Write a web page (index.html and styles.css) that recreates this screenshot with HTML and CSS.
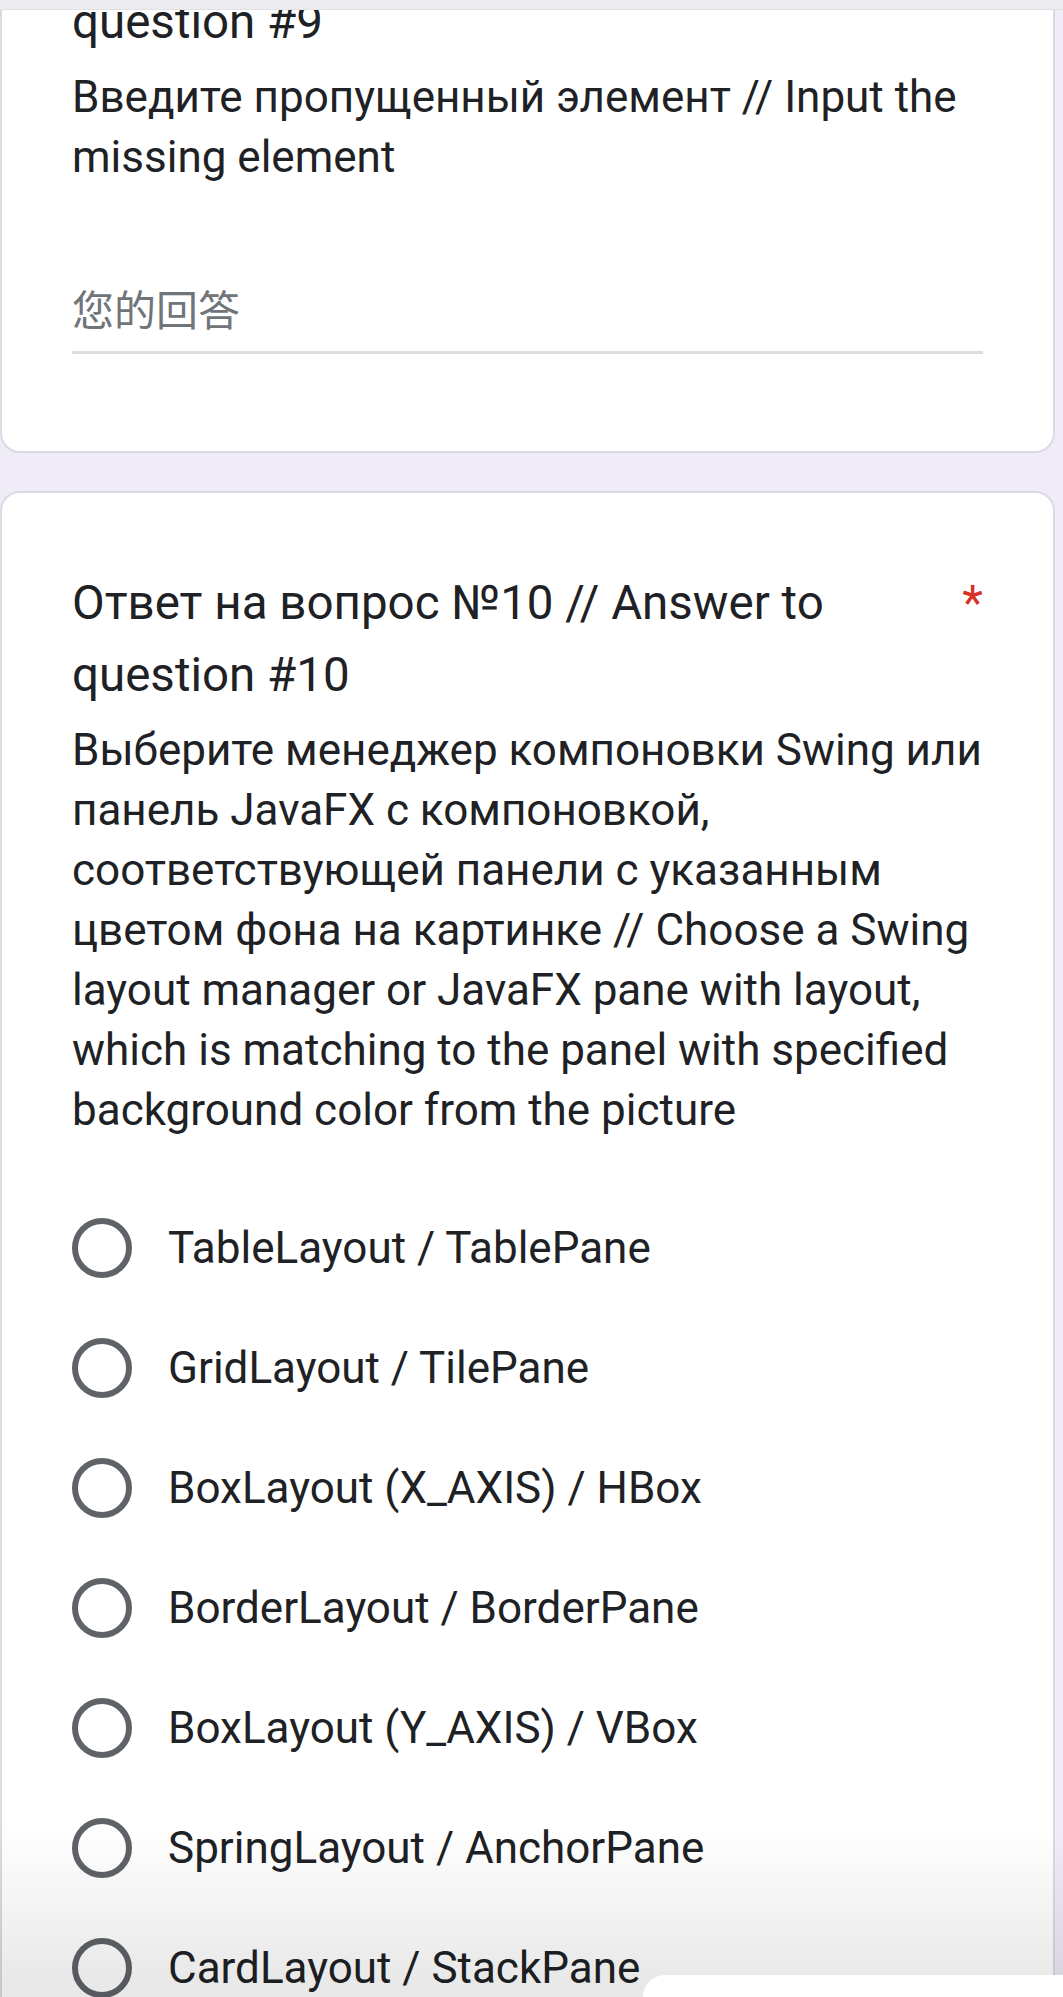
FILE: index.html
```html
<!DOCTYPE html>
<html lang="ru">
<head>
<meta charset="utf-8">
<title>Form</title>
<link rel="stylesheet" href="styles.css">
</head>
<body>
<div class="topbar"></div>
<main class="page">
  <section class="card card-first">
    <div class="title-row">
      <div class="title">Ответ на вопрос №9 // Answer to question #9</div>
      <span class="req">*</span>
    </div>
    <div class="desc">Введите пропущенный элемент // Input the<br>missing element</div>
    <div class="answer"><span class="placeholder">您的回答</span></div>
  </section>

  <section class="card card-second">
    <div class="title-row">
      <div class="title">Ответ на вопрос №10 // Answer to question #10</div>
      <span class="req">*</span>
    </div>
    <div class="desc">Выберите менеджер компоновки Swing или<br>панель JavaFX с компоновкой,<br>соответствующей панели с указанным<br>цветом фона на картинке // Choose a Swing<br>layout manager or JavaFX pane with layout,<br>which is matching to the panel with specified<br>background color from the picture</div>
    <ul class="options">
      <li class="option"><span class="radio"></span><span class="label">TableLayout / TablePane</span></li>
      <li class="option"><span class="radio"></span><span class="label">GridLayout / TilePane</span></li>
      <li class="option"><span class="radio"></span><span class="label">BoxLayout (X_AXIS) / HBox</span></li>
      <li class="option"><span class="radio"></span><span class="label">BorderLayout / BorderPane</span></li>
      <li class="option"><span class="radio"></span><span class="label">BoxLayout (Y_AXIS) / VBox</span></li>
      <li class="option"><span class="radio"></span><span class="label">SpringLayout / AnchorPane</span></li>
      <li class="option"><span class="radio"></span><span class="label">CardLayout / StackPane</span></li>
      <li class="option"><span class="radio"></span><span class="label">FlowLayout / FlowPane</span></li>
    </ul>
  </section>
</main>
<div class="shade"></div>
<div class="toast"></div>
</body>
</html>
```

FILE: styles.css
```css
html, body {
  margin: 0;
  padding: 0;
}
body {
  background: #efebf7;
  font-family: Roboto, "Noto Sans CJK SC", sans-serif;
  color: #202124;
  width: 1063px;
  height: 1997px;
  overflow: hidden;
}
.topbar {
  position: fixed;
  top: 0;
  left: 0;
  right: 0;
  height: 9px;
  background: #ececef;
  border-bottom: 1px solid #e2e1e6;
  z-index: 5;
}
.page {
  display: flex;
  flex-direction: column;
  gap: 38px;
}
.card {
  box-sizing: border-box;
  width: 1055px;
  background: #fff;
  border: 2px solid #dcd9e4;
  border-radius: 20px;
  padding: 73px 70px;
}
.card-first {
  margin-top: -161px;
}
.card-second {
  padding-top: 74px;
}
.title-row {
  display: flex;
  align-items: flex-start;
}
.title {
  flex: 1;
  font-size: 47.5px;
  line-height: 72px;
  padding-right: 60px;
}
.req {
  font-size: 48px;
  line-height: 72px;
  color: #d93025;
}
.desc {
  margin-top: 9px;
  font-size: 44px;
  line-height: 60px;
  white-space: nowrap;
}
.answer {
  margin-top: 95px;
  margin-bottom: 24px;
  padding-bottom: 9px;
  border-bottom: 3px solid #dcdde1;
}
.placeholder {
  display: block;
  font-size: 42px;
  line-height: 60px;
  color: #70757a;
}
.options {
  list-style: none;
  margin: 48px 0 0;
  padding: 0;
}
.option {
  display: flex;
  align-items: center;
  gap: 36px;
  height: 120px;
}
.radio {
  box-sizing: border-box;
  flex-shrink: 0;
  width: 60px;
  height: 60px;
  border: 6px solid #5f6368;
  border-radius: 50%;
}
.label {
  font-size: 44px;
  line-height: 60px;
}
.shade {
  position: fixed;
  left: 0;
  right: 0;
  bottom: 0;
  height: 170px;
  background: linear-gradient(to bottom, rgba(0,0,0,0) 0, rgba(0,0,0,0.085) 148px, rgba(0,0,0,0.09) 100%);
  z-index: 6;
}
.toast {
  position: fixed;
  left: 643px;
  right: 0;
  bottom: 0;
  height: 22px;
  background: #fff;
  border-top-left-radius: 22px;
  z-index: 7;
}
```
